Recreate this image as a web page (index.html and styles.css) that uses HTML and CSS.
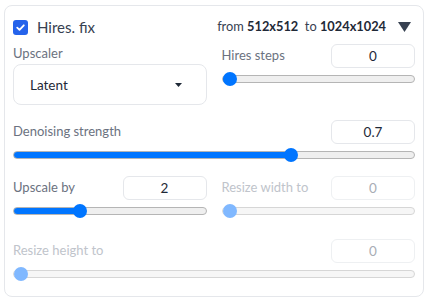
FILE: index.html
```html
<!DOCTYPE html>
<html>
<head>
<meta charset="utf-8">
<link rel="stylesheet" href="styles.css">
</head>
<body>
<div class="card">
  <div class="header">
    <label class="check">
      <span class="box"><svg width="11" height="11" viewBox="0 0 11 11"><path d="M2.2 5.6 L4.5 7.8 L8.8 3.3" fill="none" stroke="#fff" stroke-width="1.8" stroke-linecap="round" stroke-linejoin="round"/></svg></span>
      <span class="check-label">Hires. fix</span>
    </label>
    <div class="info">
      <span>from <b>512x512</b>&nbsp; to <b>1024x1024</b></span>
      <svg class="tri" width="13" height="10" viewBox="0 0 13 10"><path d="M0 0 H13 L6.5 10 Z" fill="#374151"/></svg>
    </div>
  </div>

  <div class="row row1">
    <div class="col">
      <div class="label">Upscaler</div>
      <div class="select"><span>Latent</span><svg width="7" height="4" viewBox="0 0 7 4"><path d="M0 0 H7 L3.5 4 Z" fill="#1f2937"/></svg></div>
    </div>
    <div class="col slider">
      <div class="top"><span class="label">Hires steps</span><input class="num" type="number" value="0"></div>
      <input class="range" type="range" min="0" max="150" value="0" style="--v:0">
    </div>
  </div>

  <div class="row row2">
    <div class="col slider">
      <div class="top"><span class="label">Denoising strength</span><input class="num" type="number" value="0.7"></div>
      <input class="range" type="range" min="0" max="1" step="0.01" value="0.7" style="--v:0.7">
    </div>
  </div>

  <div class="row row3">
    <div class="col slider">
      <div class="top"><span class="label">Upscale by</span><input class="num" type="number" value="2"></div>
      <input class="range" type="range" min="1" max="4" step="0.05" value="2" style="--v:0.3333">
    </div>
    <div class="col slider disabled">
      <div class="top"><span class="label">Resize width to</span><input class="num" type="number" value="0" disabled></div>
      <input class="range" type="range" min="0" max="2048" value="0" disabled style="--v:0">
    </div>
  </div>

  <div class="row row4">
    <div class="col slider disabled">
      <div class="top"><span class="label">Resize height to</span><input class="num" type="number" value="0" disabled></div>
      <input class="range" type="range" min="0" max="2048" value="0" disabled style="--v:0">
    </div>
  </div>
</div>
</body>
</html>
```

FILE: styles.css
```css
* { box-sizing: border-box; }
html, body { margin: 0; padding: 0; background: #fff; }
body {
  font-family: "Lato", "Noto Sans", sans-serif;
  color: #374151;
  width: 429px;
  height: 298px;
  overflow: hidden;
}
.card {
  margin: 5px 5px 0 4px;
  height: 292px;
  border: 1px solid #e5e7eb;
  border-radius: 8px;
  padding: 8px 8px 0 8px;
}
.header {
  display: flex;
  justify-content: space-between;
  align-items: center;
  height: 26px;
}
.check { display: flex; align-items: center; gap: 9px; }
.box {
  width: 15px; height: 15px;
  border-radius: 3px;
  background: #2563eb;
  display: flex; align-items: center; justify-content: center;
}
.check-label { font-size: 15px; color: #374151; }
.info { display: flex; align-items: center; font-size: 12.8px; color: #374151; margin-right: 4px; margin-top: -2px; }
.info b { font-weight: 700; color: #1f2937; }
.tri { margin-left: 12px; margin-top: 2px; }

.row { display: flex; gap: 15px; }
.col { flex: 1; min-width: 0; display: flex; flex-direction: column; }
.row1 { margin-top: 4px; }
.row2 { margin-top: 15px; }
.row3 { margin-top: 13px; }
.row4 { margin-top: 20px; }

.label { font-size: 13px; color: #6b7280; }
.row1 > .col > .label { line-height: 18px; }
.top .label { margin-top: -2px; }
.select {
  margin-top: 2px;
  height: 41px;
  border: 1px solid #e5e7eb;
  border-radius: 8px;
  display: flex; align-items: center; justify-content: space-between;
  padding: 0 24px 0 16px;
  font-size: 13.5px; color: #1f2937;
}
.top { display: flex; justify-content: space-between; align-items: center; height: 24px; }
.num {
  width: 84px; height: 24px;
  border: 1px solid #e5e7eb;
  border-radius: 6px;
  text-align: center;
  font-family: inherit;
  font-size: 13.5px;
  color: #1f2937;
  background: #fff;
  padding: 0;
  -moz-appearance: textfield;
}
.num::-webkit-inner-spin-button, .num::-webkit-outer-spin-button { -webkit-appearance: none; margin: 0; }

.range {
  -webkit-appearance: none;
  appearance: none;
  width: 100%;
  height: 16px;
  margin: 3px 0 0 0;
  padding: 0;
  background: transparent;
  --fill: calc(7px + var(--v) * (100% - 14px));
}
.range::-webkit-slider-runnable-track {
  box-sizing: border-box;
  height: 8px;
  border-radius: 4px;
  border: 1px solid #b5b5b5;
  background: linear-gradient(#0075ff, #0075ff) 0 0 / var(--fill) 100% no-repeat, #efefef;
}
.range::-webkit-slider-thumb {
  -webkit-appearance: none;
  appearance: none;
  width: 14px; height: 14px;
  border-radius: 50%;
  background: #0075ff;
  border: none;
  margin-top: -4px;
}
.disabled .range::-webkit-slider-runnable-track {
  border-color: #d6d6d6;
  background: #f6f6f6;
}
.disabled .range::-webkit-slider-thumb { background: #80b8ff; }
.disabled .label { color: #c0c4cb; }
.disabled .num { color: #a8adb5; border-color: #eef0f2; }
```
